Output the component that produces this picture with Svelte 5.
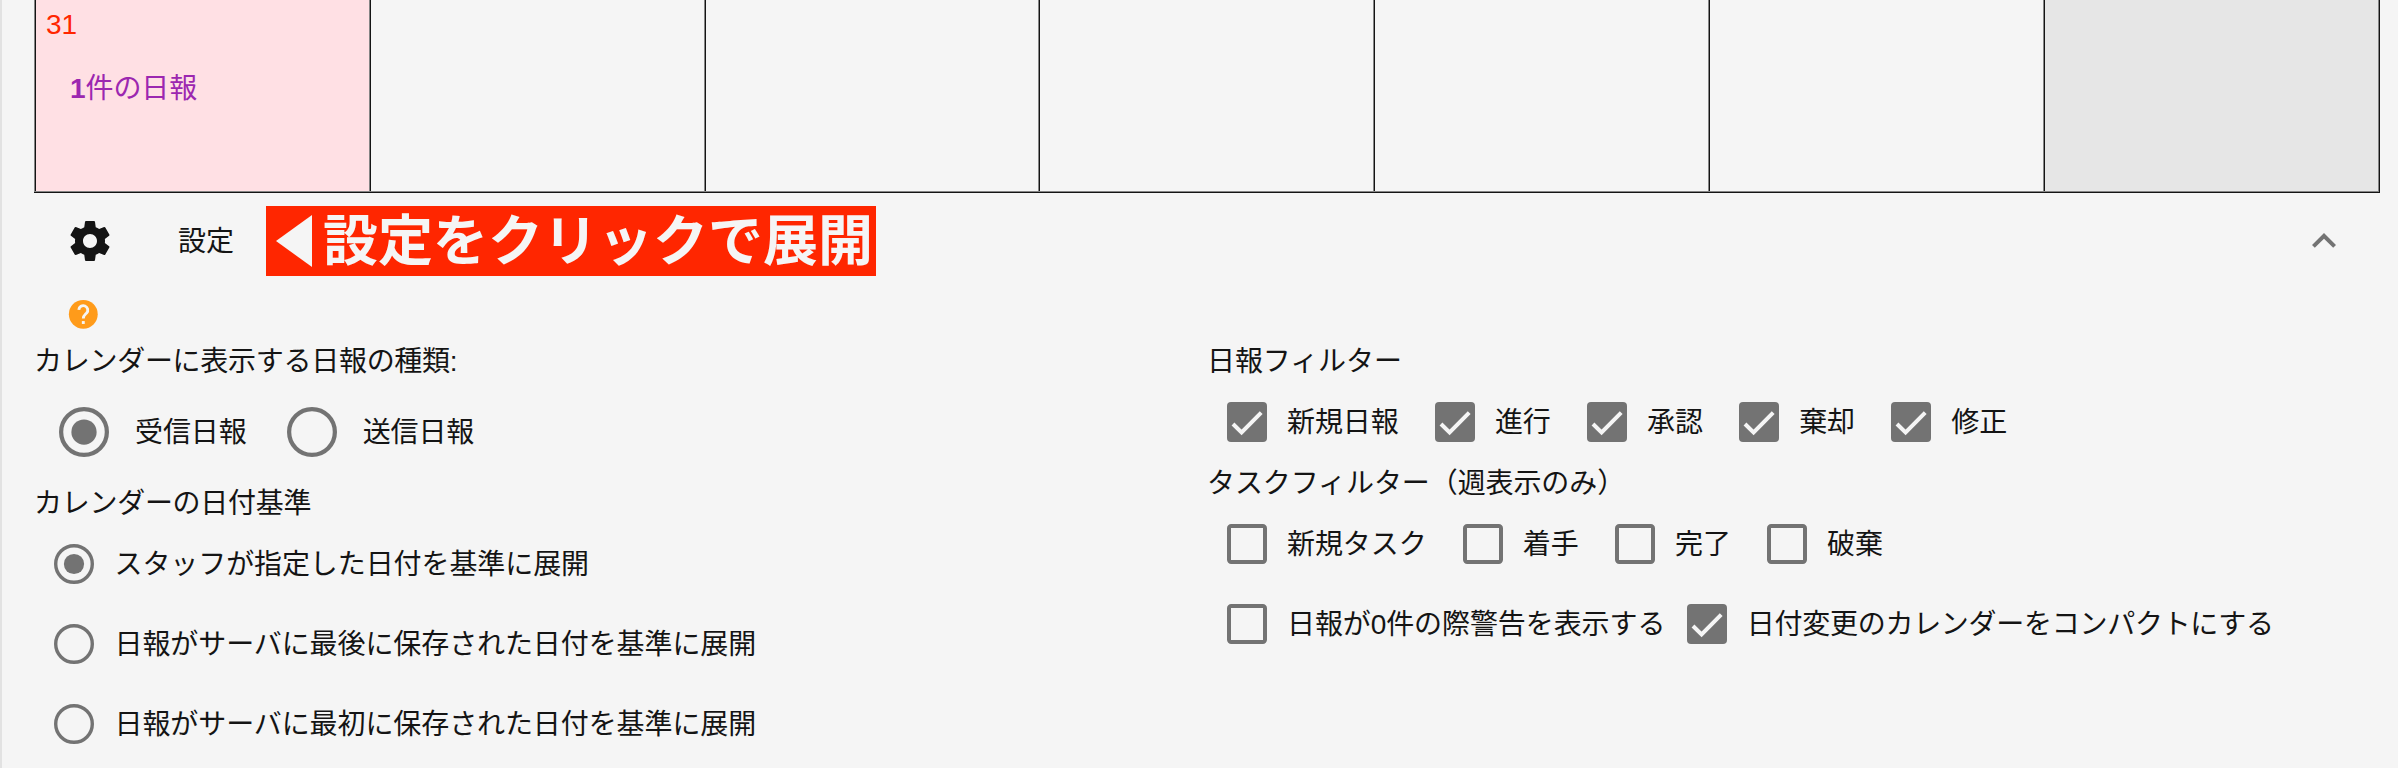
<script>
  const cells = [
    { kind: 'sunday', day: '31', count: '1' },
    { kind: '' },
    { kind: '' },
    { kind: '' },
    { kind: '' },
    { kind: '' },
    { kind: 'outside' }
  ];

  let expanded = $state(true);
  let reportType = $state('受信日報');
  let dateBasis = $state('スタッフが指定した日付を基準に展開');

  const reportTypes = ['受信日報', '送信日報'];
  const dateBases = [
    'スタッフが指定した日付を基準に展開',
    '日報がサーバに最後に保存された日付を基準に展開',
    '日報がサーバに最初に保存された日付を基準に展開'
  ];

  let reportFilters = $state([
    { label: '新規日報', on: true },
    { label: '進行', on: true },
    { label: '承認', on: true },
    { label: '棄却', on: true },
    { label: '修正', on: true }
  ]);
  let taskFilters = $state([
    { label: '新規タスク', on: false },
    { label: '着手', on: false },
    { label: '完了', on: false },
    { label: '破棄', on: false }
  ]);
  let options = $state([
    { label: '日報が0件の際警告を表示する', on: false },
    { label: '日付変更のカレンダーをコンパクトにする', on: true, snug: true }
  ]);
</script>

{#snippet radio(on, size)}
  <svg width={size} height={size} viewBox="2 2 20 20" aria-hidden="true">
    <circle cx="12" cy="12" r="9.15" fill="none" stroke="#737373" stroke-width="1.7" />
    {#if on}<circle cx="12" cy="12" r="5.05" fill="#737373" />{/if}
  </svg>
{/snippet}

{#snippet checks(items, tight)}
  <div class="checks" class:tight>
    {#each items as item}
      <button class="choice check" role="checkbox" aria-checked={item.on} onclick={() => (item.on = !item.on)}>
        <svg width="40" height="40" viewBox="0 0 40 40" aria-hidden="true">
          {#if item.on}
            <rect width="40" height="40" rx="4" fill="#737373" />
            <path d="M6 22l8.6 8.5L34.2 10.6" fill="none" stroke="#f5f5f5" stroke-width="4" />
          {:else}
            <rect x="2" y="2" width="36" height="36" rx="2.2" fill="none" stroke="#737373" stroke-width="4" />
          {/if}
        </svg>
        <span class:snug={item.snug}>{item.label}</span>
      </button>
    {/each}
  </div>
{/snippet}

<main>
  <section class="week">
    {#each cells as cell}
      <div class="cell {cell.kind}">
        {#if cell.day}
          <div class="day">{cell.day}</div>
          <div class="reports"><b>{cell.count}</b>件の日報</div>
        {/if}
      </div>
    {/each}
  </section>

  <header>
    <svg class="gear" width="48" height="48" viewBox="0 0 24 24" aria-hidden="true">
      <path fill="#141414" d="M19.43 12.98c.04-.32.07-.64.07-.98s-.03-.66-.07-.98l2.11-1.65c.19-.15.24-.42.12-.64l-2-3.46c-.12-.22-.39-.3-.61-.22l-2.49 1c-.52-.4-1.08-.73-1.69-.98l-.38-2.65C14.46 2.18 14.25 2 14 2h-4c-.25 0-.46.18-.49.42l-.38 2.65c-.61.25-1.17.59-1.69.98l-2.49-1c-.23-.09-.49 0-.61.22l-2 3.46c-.13.22-.07.49.12.64l2.11 1.65c-.04.32-.07.65-.07.98s.03.66.07.98l-2.11 1.65c-.19.15-.24.42-.12.64l2 3.46c.12.22.39.3.61.22l2.49-1c.52.4 1.08.73 1.69.98l.38 2.65c.03.24.24.42.49.42h4c.25 0 .46-.18.49-.42l.38-2.65c.61-.25 1.17-.59 1.69-.98l2.49 1c.23.09.49 0 .61-.22l2-3.46c.12-.22.07-.49-.12-.64l-2.11-1.65zM12 15.5c-1.93 0-3.5-1.57-3.5-3.5s1.57-3.5 3.5-3.5 3.5 1.57 3.5 3.5-1.57 3.5-3.5 3.5z" />
    </svg>
    <span class="title">設定</span>
    <strong class="callout">
      <svg width="36" height="52" viewBox="0 0 36 52" aria-hidden="true"><path d="M0 26L36 0v52z" fill="#f5f5f5" /></svg>
      <span>設定をクリックで展開</span>
    </strong>
    <button class="toggle" aria-expanded={expanded} onclick={() => (expanded = !expanded)}>
      <svg width="48" height="48" viewBox="0 0 24 24" aria-hidden="true">
        <path fill="#737373" d="M12 8l-6 6 1.41 1.41L12 10.83l4.59 4.58L18 14z" />
      </svg>
    </button>
  </header>

  {#if expanded}
    <div class="help">
      <svg width="34.6" height="34.6" viewBox="0 0 24 24" aria-hidden="true">
        <circle cx="12" cy="12" r="10" fill="#ff9b1a" />
        <path d="M8.9 8.9a3.1 3.1 0 1 1 5.4 2.25C13.1 12.3 12 12.9 12 15" fill="none" stroke="#f5f5f5" stroke-width="2" />
        <rect x="11" y="16.7" width="2" height="2" fill="#f5f5f5" />
      </svg>
    </div>
    <div class="settings">
      <section>
        <h3 class="snug">カレンダーに表示する日報の種類:</h3>
        <div class="types">
          {#each reportTypes as type}
            <button class="choice" role="radio" aria-checked={reportType === type} onclick={() => (reportType = type)}>
              {@render radio(reportType === type, 50)}
              <span>{type}</span>
            </button>
          {/each}
        </div>
        <h3 class="snug">カレンダーの日付基準</h3>
        <div class="bases">
          {#each dateBases as basis}
            <button class="choice" role="radio" aria-checked={dateBasis === basis} onclick={() => (dateBasis = basis)}>
              {@render radio(dateBasis === basis, 40)}
              <span>{basis}</span>
            </button>
          {/each}
        </div>
      </section>
      <section>
        <h3>日報フィルター</h3>
        {@render checks(reportFilters, false)}
        <h3>タスクフィルター（週表示のみ）</h3>
        {@render checks(taskFilters, false)}
        {@render checks(options, true)}
      </section>
    </div>
  {/if}
</main>

<style>
  :global(body) {
    margin: 0;
    background: #f5f5f5;
  }
  main {
    box-sizing: border-box;
    height: 768px;
    overflow: hidden;
    border-left: 2px solid #e2e2e2;
    padding: 0 18px 0 32px;
    background: #f5f5f5;
    color: #141414;
    font: 28px/42px "Liberation Sans", "Noto Sans CJK JP", sans-serif;
    letter-spacing: -0.09px;
    white-space: nowrap;
  }
  svg {
    display: block;
    flex: none;
  }
  button {
    border: 0;
    padding: 0;
    background: none;
    color: inherit;
    font: inherit;
    letter-spacing: inherit;
    cursor: pointer;
  }
  .week {
    display: grid;
    grid-template-columns: repeat(6, 334.8px) 1fr;
    box-sizing: border-box;
    height: 193px;
    border-right: 1px solid #141414;
    border-bottom: 1px solid #141414;
    box-shadow: inset -1px -1px #858585;
  }
  .cell {
    box-sizing: border-box;
    margin-bottom: 1px;
    border-left: 1px solid #858585;
    box-shadow: inset 1px 0 #141414;
    padding: 4px 0 0 11px;
  }
  .cell:last-child {
    margin-right: 1px;
  }
  .sunday {
    background: #ffe0e4;
  }
  .outside {
    background: #e6e6e6;
  }
  .day {
    color: #ff2600;
  }
  .reports {
    margin-top: 22px;
    padding-left: 24px;
    color: #9c27b0;
  }
  header {
    display: flex;
    align-items: center;
    height: 96px;
    padding: 0 32px;
  }
  .title {
    width: 88px;
    margin-left: 64px;
    padding-top: 2px;
  }
  .callout {
    display: flex;
    align-items: center;
    gap: 11px;
    box-sizing: border-box;
    width: 610px;
    height: 70px;
    padding-left: 10px;
    background: #ff2600;
    color: #f5f5f5;
    font-size: 55px;
    line-height: 70px;
    letter-spacing: 0;
  }
  .toggle {
    margin-left: auto;
  }
  .help {
    display: flex;
    align-items: center;
    height: 51px;
    padding-left: 32px;
  }
  .settings {
    display: grid;
    grid-template-columns: 1fr 1fr;
  }
  h3 {
    box-sizing: border-box;
    height: 42px;
    margin: 0;
    padding-top: 1px;
    font-size: 28px;
    font-weight: 400;
  }
  .snug {
    letter-spacing: -0.28px;
  }
  .choice {
    display: flex;
    align-items: center;
    gap: 20px;
  }
  .choice span {
    padding-top: 2px;
  }
  .types {
    display: flex;
    align-items: center;
    gap: 40px;
    height: 100px;
    padding-left: 25px;
  }
  .types .choice {
    gap: 26px;
  }
  .bases .choice {
    height: 80px;
    padding-left: 20px;
    gap: 20.5px;
  }
  .checks {
    display: flex;
    align-items: center;
    gap: 36.3px;
    height: 80px;
    padding-left: 20px;
  }
  .checks.tight {
    gap: 21.5px;
  }
</style>
